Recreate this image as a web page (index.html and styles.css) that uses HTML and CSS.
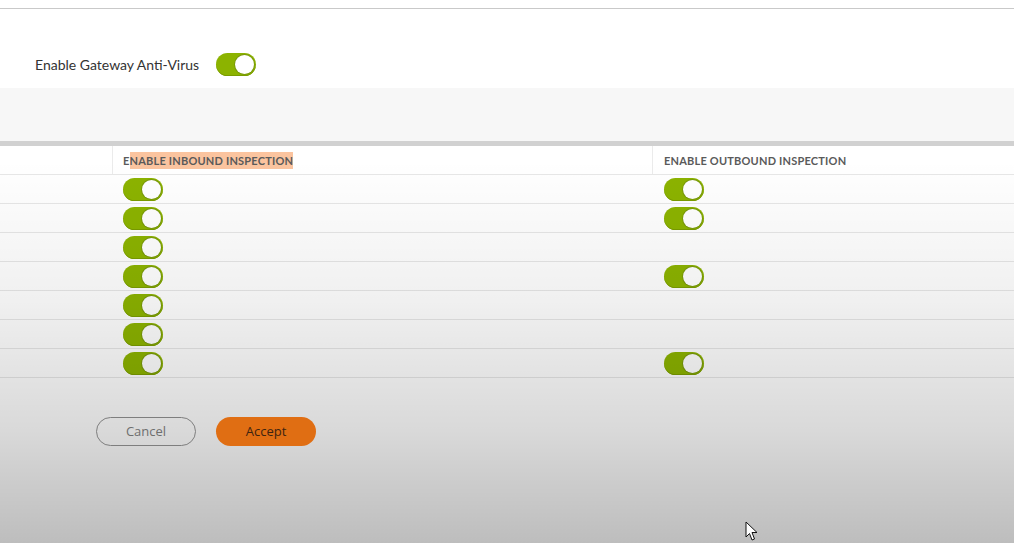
FILE: index.html
```html
<!DOCTYPE html>
<html lang="en">
<head>
  <meta charset="UTF-8">
  <meta name="viewport" content="width=device-width, initial-scale=1.0">
  <title>Gateway Anti-Virus</title>
  <link rel="stylesheet" href="styles.css">
</head>
<body>

  <!-- Top bar -->
  <div class="topbar"></div>

  <!-- Global setting -->
  <div class="setting">
    <span class="setting-label">Enable Gateway Anti-Virus</span>
    <span class="toggle on"></span>
  </div>

  <div class="band"></div>

  <!-- Protocol table -->
  <div class="grid">
    <div class="grid-row head">
      <div class="cell first"></div>
      <div class="cell col-in">E<span class="selected">NABLE INBOUND INSPECTION</span></div>
      <div class="cell col-out">ENABLE OUTBOUND INSPECTION</div>
    </div>
    <div class="grid-row">
      <div class="cell first"></div>
      <div class="cell col-in"><span class="toggle on"></span></div>
      <div class="cell col-out"><span class="toggle on"></span></div>
    </div>
    <div class="grid-row">
      <div class="cell first"></div>
      <div class="cell col-in"><span class="toggle on"></span></div>
      <div class="cell col-out"><span class="toggle on"></span></div>
    </div>
    <div class="grid-row">
      <div class="cell first"></div>
      <div class="cell col-in"><span class="toggle on"></span></div>
      <div class="cell col-out"></div>
    </div>
    <div class="grid-row">
      <div class="cell first"></div>
      <div class="cell col-in"><span class="toggle on"></span></div>
      <div class="cell col-out"><span class="toggle on"></span></div>
    </div>
    <div class="grid-row">
      <div class="cell first"></div>
      <div class="cell col-in"><span class="toggle on"></span></div>
      <div class="cell col-out"></div>
    </div>
    <div class="grid-row">
      <div class="cell first"></div>
      <div class="cell col-in"><span class="toggle on"></span></div>
      <div class="cell col-out"></div>
    </div>
    <div class="grid-row">
      <div class="cell first"></div>
      <div class="cell col-in"><span class="toggle on"></span></div>
      <div class="cell col-out"><span class="toggle on"></span></div>
    </div>
  </div>

  <!-- Actions -->
  <div class="actions">
    <button class="btn btn-cancel">Cancel</button>
    <button class="btn btn-accept">Accept</button>
  </div>

  <!-- Mouse pointer -->
  <svg class="pointer" width="14" height="21" viewBox="0 0 14 21">
    <path d="M1 1 L1 16 L4.5 12.5 L7 19 L9.5 18 L7 11.5 L12 11.5 Z" fill="#fff" stroke="#111" stroke-width="1" stroke-linejoin="miter"/>
  </svg>

</body>
</html>
```

FILE: styles.css
```css
* {
  box-sizing: border-box;
  margin: 0;
  padding: 0;
}

html, body {
  height: 100%;
}

body {
  position: relative;
  overflow: hidden;
  background: #fff;
  font-family: Lato, "Open Sans", Arial, sans-serif;
  color: #333;
}

/* Darkening fade over the lower part of the page */
body::after {
  content: "";
  position: absolute;
  inset: 0;
  pointer-events: none;
  background: linear-gradient(to bottom,
    rgba(0, 0, 0, 0) 0px,
    rgba(0, 0, 0, 0) 160px,
    rgba(0, 0, 0, 0.06) 300px,
    rgba(0, 0, 0, 0.15) 430px,
    rgba(0, 0, 0, 0.26) 543px);
}

.topbar {
  height: 9px;
  border-bottom: 1px solid #c9c9c9;
}

/* Setting */
.setting {
  display: flex;
  align-items: center;
  gap: 17px;
  padding: 44px 0 12px 35px;
}

.setting-label {
  font-size: 14px;
  color: #333;
}

.band {
  height: 58px;
  background: #f7f7f7;
  border-bottom: 5px solid #d1d1d1;
}

/* Toggle switch */
.toggle {
  display: inline-block;
  position: relative;
  width: 40px;
  height: 23px;
  border-radius: 12px;
  background: #8cb300;
  box-shadow: inset 0 -1px 0 #7a9c00;
  vertical-align: middle;
}

.toggle.on::after {
  content: "";
  position: absolute;
  top: 2px;
  right: 2px;
  width: 19px;
  height: 19px;
  border-radius: 50%;
  background: #fff;
  box-shadow: 0 0 0 1px #79990a;
}

/* Table */
.grid-row {
  display: flex;
  height: 29px;
  border-bottom: 1px solid #e7e7e7;
}

.cell {
  display: flex;
  align-items: center;
}

.cell.first {
  width: 112px;
}

.cell.col-in {
  width: 540px;
  padding-left: 11px;
}

.cell.col-out {
  flex: 1;
  padding-left: 12px;
}

.head .cell.col-in,
.head .cell.col-out {
  border-left: 1px solid #ebebeb;
  font-size: 11px;
  font-weight: bold;
  letter-spacing: 0.2px;
  color: #5a5a5a;
}

.head .cell.col-in {
  padding-left: 10px;
}

.head .cell.col-out {
  padding-left: 11px;
}

.selected {
  background: #fbc49f;
  line-height: 17px;
}

/* Buttons */
.actions {
  position: relative;
  z-index: 2;
  display: flex;
  gap: 20px;
  padding: 39px 0 0 96px;
}

.btn {
  width: 100px;
  height: 29px;
  border-radius: 15px;
  font-family: "Open Sans", Arial, sans-serif;
  font-size: 13px;
  line-height: 27px;
  cursor: pointer;
}

.btn-cancel {
  background: transparent;
  border: 1px solid #7e7e7e;
  color: #6e6e6e;
}

.btn-accept {
  background: #e06e13;
  border: none;
  color: #3e2411;
}

.pointer {
  position: absolute;
  left: 745px;
  top: 521px;
  z-index: 2;
}
```
